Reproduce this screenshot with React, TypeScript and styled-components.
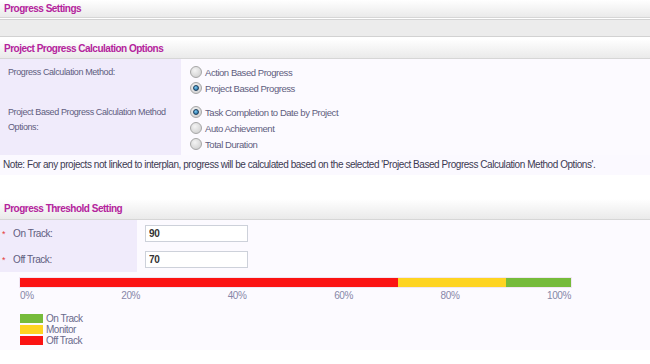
import * as React from 'react';
import styled, { createGlobalStyle } from 'styled-components';

const GlobalStyle = createGlobalStyle`
    body {
        margin: 0;
        background: #ffffff;
        font-family: "Liberation Sans", Arial, sans-serif;
        font-size: 10px;
        letter-spacing: -0.4px;
    }
`;

const Page = styled.div`
    width: 650px;
`;

const SectionHeader = styled.div<{ $height: number }>`
    height: ${p => p.$height}px;
    line-height: ${p => p.$height}px;
    padding-left: 4px;
    background: linear-gradient(#ffffff, #eaeaea);
    border-bottom: 1px solid #d6d6d6;
    color: #b4239c;
    font-weight: bold;
    font-size: 10px;
    letter-spacing: -0.5px;
`;

const GreyBand = styled.div`
    margin: 1px 0 2px;
    height: 16px;
    background: #ececec;
    border-top: 1px solid #d2d2d2;
    border-bottom: 1px solid #d2d2d2;
`;

const FormGrid = styled.div<{ $labelWidth: number }>`
    display: grid;
    grid-template-columns: ${p => p.$labelWidth}px 1fr;
    background: #fcfaff;
`;

const LabelCell = styled.div`
    background: #f0ebfb;
    color: #5f5d7e;
    padding: 6px 2px 3px 8px;
    line-height: 15px;
    font-size: 9px;
    letter-spacing: -0.4px;
`;

const FieldCell = styled.div`
    padding: 5px 8px 3px;
`;

const RadioLine = styled.label`
    display: flex;
    align-items: center;
    gap: 3px;
    height: 16px;
    color: #5f5d7e;
    font-size: 9.5px;
    letter-spacing: -0.45px;
`;

const RadioDot = styled.span<{ $checked?: boolean }>`
    width: 10px;
    height: 10px;
    border-radius: 50%;
    border: 1px solid #a6a6a6;
    background: radial-gradient(circle at 40% 35%, #f4f4f4, #c9c9c9);
    display: inline-flex;
    align-items: center;
    justify-content: center;
    box-sizing: content-box;
    margin-left: 1px;

    &::after {
        content: '';
        display: ${p => (p.$checked ? 'block' : 'none')};
        width: 4px;
        height: 4px;
        border-radius: 50%;
        background: radial-gradient(circle at 40% 35%, #7fcaf2, #0f5d93);
        border: 1px solid #1c3e5c;
    }
`;

const Note = styled.div`
    background: #fbf9ff;
    color: #3b3a52;
    padding: 3px 3px;
    line-height: 14px;
    letter-spacing: -0.45px;
`;

const Gap = styled.div`
    height: 24px;
`;

const Star = styled.span`
    color: #e53b3b;
    margin-right: 8px;
    font-size: 9px;
`;

const ThresholdLabel = styled(LabelCell)`
    padding: 5px 2px 3px;
    line-height: 17px;
    font-size: 10px;
    letter-spacing: -0.45px;
`;

const ThresholdField = styled.div`
    padding: 5px 8px 3px;
`;

const NumberInput = styled.input`
    box-sizing: border-box;
    width: 103px;
    height: 17px;
    border: 1px solid #cdd1da;
    background: #ffffff;
    padding: 0 3px;
    font-family: "Liberation Sans", Arial, sans-serif;
    font-size: 10px;
    font-weight: bold;
    letter-spacing: -0.2px;
    color: #333333;
    outline: none;
`;

const ChartArea = styled.div`
    background: #fcfaff;
    padding: 6px 79px 5px 20px;
`;

const Bar = styled.div`
    display: flex;
    height: 9px;
    box-shadow: 0 0 0 1px #f1e6f3;
`;

const BarPart = styled.div<{ $color: string }>`
    background: ${p => p.$color};
`;

const Scale = styled.div`
    display: flex;
    justify-content: space-between;
    color: #8787a8;
    line-height: 14px;
    margin-top: 2px;
`;

const Legend = styled.div`
    margin-top: 11px;
    display: flex;
    flex-direction: column;
    gap: 2px;
`;

const LegendItem = styled.div`
    display: flex;
    align-items: center;
    gap: 3px;
    height: 9px;
    color: #6a6a8c;
    letter-spacing: -0.5px;
`;

const Swatch = styled.span<{ $color: string }>`
    width: 23px;
    height: 9px;
    background: ${p => p.$color};
`;

const segments = [
    { color: '#fb1313', width: 378 },
    { color: '#fed422', width: 108 },
    { color: '#76bb3b', width: 65 },
];

const legend = [
    { color: '#76bb3b', text: 'On Track' },
    { color: '#fed422', text: 'Monitor' },
    { color: '#fb1313', text: 'Off Track' },
];

export default function App() {
    return (
        <Page>
            <GlobalStyle />
            <SectionHeader $height={17}>Progress Settings</SectionHeader>
            <GreyBand />
            <SectionHeader $height={19}>Project Progress Calculation Options</SectionHeader>

            <FormGrid $labelWidth={181}>
                <LabelCell>Progress Calculation Method:</LabelCell>
                <FieldCell>
                    <RadioLine><RadioDot />Action Based Progress</RadioLine>
                    <RadioLine><RadioDot $checked />Project Based Progress</RadioLine>
                </FieldCell>
                <LabelCell>Project Based Progress Calculation Method Options:</LabelCell>
                <FieldCell>
                    <RadioLine><RadioDot $checked />Task Completion to Date by Project</RadioLine>
                    <RadioLine><RadioDot />Auto Achievement</RadioLine>
                    <RadioLine><RadioDot />Total Duration</RadioLine>
                </FieldCell>
            </FormGrid>
            <Note>
                Note: For any projects not linked to interplan, progress will be calculated based on the selected 'Project Based Progress Calculation Method Options'.
            </Note>

            <Gap />
            <SectionHeader $height={20}>Progress Threshold Setting</SectionHeader>
            <FormGrid $labelWidth={137}>
                <ThresholdLabel><Star>*</Star>On Track:</ThresholdLabel>
                <ThresholdField><NumberInput defaultValue="90" /></ThresholdField>
                <ThresholdLabel><Star>*</Star>Off Track:</ThresholdLabel>
                <ThresholdField><NumberInput defaultValue="70" /></ThresholdField>
            </FormGrid>
            <ChartArea>
                <Bar>
                    {segments.map(s => (
                        <BarPart key={s.color} $color={s.color} style={{ width: s.width }} />
                    ))}
                </Bar>
                <Scale>
                    {['0%', '20%', '40%', '60%', '80%', '100%'].map(t => <span key={t}>{t}</span>)}
                </Scale>
                <Legend>
                    {legend.map(l => (
                        <LegendItem key={l.text}><Swatch $color={l.color} />{l.text}</LegendItem>
                    ))}
                </Legend>
            </ChartArea>
        </Page>
    );
}
